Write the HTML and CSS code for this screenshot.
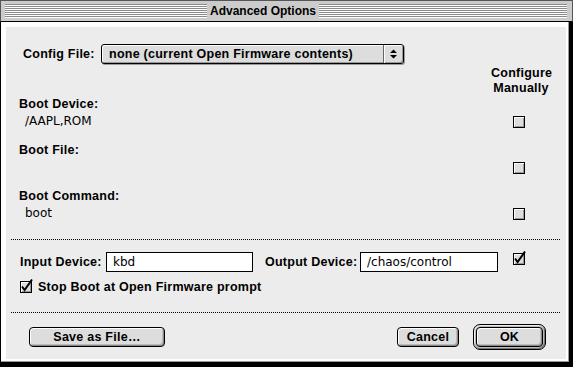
FILE: index.html
```html
<!DOCTYPE html>
<html>
<head>
<meta charset="utf-8">
<title>Advanced Options</title>
<link rel="stylesheet" href="styles.css">
</head>
<body>
<div class="window">
  <div class="titlebar">
    <div class="stripes left"></div>
    <div class="title">Advanced Options</div>
    <div class="stripes right"></div>
  </div>
  <div class="frame">
    <div class="content">
      <div class="config-row">
        <span class="label config-label">Config File:</span>
        <div class="popup">
          <span class="popup-text">none (current Open Firmware contents)</span>
          <span class="popup-arrows">
            <svg width="7" height="10" viewBox="0 0 7 10"><path d="M3.5 0.5 L7 4 H0 Z M0 6 H7 L3.5 9.5 Z" fill="#000"/></svg>
          </span>
        </div>
      </div>

      <div class="options">
        <div class="manual-head">Configure<br>Manually</div>
        <div class="group">
          <div class="label">Boot Device:</div>
          <div class="value">/AAPL,ROM</div>
          <span class="checkbox"></span>
        </div>
        <div class="group">
          <div class="label">Boot File:</div>
          <div class="value"></div>
          <span class="checkbox"></span>
        </div>
        <div class="group">
          <div class="label">Boot Command:</div>
          <div class="value">boot</div>
          <span class="checkbox"></span>
        </div>
      </div>

      <div class="separator first"></div>

      <div class="device-row">
        <span class="label input-label">Input Device:</span>
        <div class="field input-field">kbd</div>
        <span class="label output-label">Output Device:</span>
        <div class="field output-field">/chaos/control</div>
        <span class="checkbox checked">
          <svg width="10" height="10" viewBox="0 0 10 10" overflow="visible"><path d="M1 4.5 L3.6 8 L11 -2.5" fill="none" stroke="#000" stroke-width="2"/></svg>
        </span>
      </div>

      <div class="stop-row">
        <span class="checkbox checked">
          <svg width="10" height="10" viewBox="0 0 10 10" overflow="visible"><path d="M1 4.5 L3.6 8 L11 -2.5" fill="none" stroke="#000" stroke-width="2"/></svg>
        </span>
        <span class="label stop-label">Stop Boot at Open Firmware prompt</span>
      </div>

      <div class="separator second"></div>

      <div class="button-row">
        <div class="button save">Save as File…</div>
        <div class="button cancel">Cancel</div>
        <div class="default-ring"><div class="button ok">OK</div></div>
      </div>
    </div>
  </div>
</div>
</body>
</html>
```
FILE: styles.css
```css
* { box-sizing: border-box; }

html, body {
  margin: 0;
  padding: 0;
  background: #ffffff;
}

body {
  font-family: "Liberation Sans", Arial, sans-serif;
  font-size: 12.5px;
  letter-spacing: 0.25px;
  color: #000;
}

.window {
  width: 573px;
  height: 367px;
  display: flex;
  flex-direction: column;
}

/* ---------- title bar ---------- */
.titlebar {
  height: 22px;
  flex: none;
  display: flex;
  align-items: center;
  background: #cccccc;
  border: 1px solid #555;
  border-bottom-color: #000;
  padding: 0 5px 0 4px;
}

.stripes {
  height: 14px;
  background: repeating-linear-gradient(to bottom, #8a8a8a 0 1px, #ffffff 1px 2px);
}

.stripes.left { width: 202px; }
.stripes.right { flex: 1; }

.title {
  font-weight: bold;
  font-size: 12px;
  letter-spacing: 0;
  line-height: 14px;
  padding: 0 3px;
  white-space: nowrap;
}

/* ---------- frame ---------- */
.frame {
  flex: 1;
  display: flex;
  min-width: 0;
  background: #ffffff;
  border-left: 1px solid #000;
  border-right: 4px solid #000;
  border-bottom: 5px solid #000;
  padding: 5px 3px 3px 5px;
  box-shadow: inset -1px -1px 0 #999;
}

.content {
  flex: 1;
  min-width: 0;
  background: #ececec;
  display: flex;
  flex-direction: column;
}

.label {
  font-weight: bold;
  white-space: nowrap;
}

/* ---------- config popup ---------- */
.config-row {
  display: flex;
  align-items: center;
  height: 20px;
  margin-top: 17px;
  padding-left: 17px;
}

.config-label { width: 78px; }

.popup {
  width: 303px;
  height: 20px;
  display: flex;
  border: 1px solid #000;
  border-radius: 3px;
  background: #dddddd;
  box-shadow: inset 1px 1px 0 #fff, inset -1px -1px 0 #999, 1px 1px 0 #999;
}

.popup-text {
  flex: 1;
  padding-left: 7px;
  font-weight: bold;
  line-height: 18px;
  white-space: nowrap;
}

.popup-arrows {
  width: 20px;
  border-left: 1px solid #666;
  box-shadow: inset 1px 0 0 #fff, inset -1px -1px 0 #999;
  border-radius: 0 2px 2px 0;
  display: flex;
  align-items: center;
  justify-content: center;
}

.popup-arrows svg { display: block; }

/* ---------- options ---------- */
.options {
  display: flex;
  flex-direction: column;
  padding: 0 17px 0 13px;
}

.manual-head {
  align-self: flex-end;
  width: 60px;
  margin-top: 2px;
  margin-right: -2px;
  text-align: center;
  font-weight: bold;
  line-height: 15px;
  white-space: nowrap;
}

.group {
  display: grid;
  grid-template-columns: 1fr 60px;
  grid-template-rows: 16px 17px;
}

.group + .group { margin-top: 13px; }

.group .label {
  grid-column: 1 / -1;
  line-height: 16px;
}

.value {
  padding: 2px 0 0 6px;
  line-height: 15px;
  font-family: "DejaVu Sans", Verdana, sans-serif;
  font-size: 12px;
  letter-spacing: 0;
}

.group .checkbox {
  align-self: end;
  justify-self: center;
  margin-bottom: 1px;
}

/* ---------- checkbox ---------- */
.checkbox {
  display: block;
  width: 12px;
  height: 12px;
  flex: none;
  border: 1px solid #000;
  background: #dddddd;
  box-shadow: inset 1px 1px 0 #fff, inset -1px -1px 0 #999;
}

.checkbox svg {
  display: block;
  overflow: visible;
}

/* ---------- separators ---------- */
.separator {
  height: 1px;
  margin: 0 5px;
  background: repeating-linear-gradient(to right, #000 0 1px, transparent 1px 2px);
}

.separator.first { margin-top: 18px; }
.separator.second { margin-top: 17px; }

/* ---------- device fields ---------- */
.device-row {
  display: flex;
  align-items: center;
  height: 20px;
  margin-top: 12px;
  padding-left: 14px;
}

.input-label { width: 86px; }
.output-label { width: 95px; margin-left: 12px; }

.field {
  height: 20px;
  border: 1px solid #000;
  background: #fff;
  padding-left: 6px;
  font-family: "DejaVu Sans", Verdana, sans-serif;
  font-size: 12px;
  letter-spacing: 0;
  line-height: 18px;
  white-space: nowrap;
}

.input-field { width: 147px; }
.output-field { width: 138px; }

.device-row .checkbox {
  align-self: flex-start;
  margin-top: 1px;
  margin-left: 15px;
}

.stop-row {
  display: flex;
  align-items: center;
  height: 16px;
  margin-top: 7px;
  padding-left: 14px;
}

.stop-label {
  margin-left: 6px;
  line-height: 16px;
}

/* ---------- buttons ---------- */
.button-row {
  display: flex;
  align-items: center;
  height: 26px;
  margin-top: 11px;
  padding: 0 20px 0 23px;
}

.button {
  height: 20px;
  border: 1px solid #000;
  border-radius: 4px;
  background: #dddddd;
  box-shadow: inset 1px 1px 0 #fff, inset -1px -1px 0 #888, inset -2px -2px 0 #bbb;
  display: flex;
  align-items: center;
  justify-content: center;
  font-weight: bold;
  white-space: nowrap;
}

.save { width: 136px; }
.cancel { width: 62px; margin-left: auto; }

.default-ring {
  margin-left: 14px;
  padding: 2px;
  border: 1px solid #000;
  border-radius: 7px;
  background: #bbbbbb;
  box-shadow: inset 1px 1px 0 #eee, inset -1px -1px 0 #777;
}

.ok { width: 67px; }
```
